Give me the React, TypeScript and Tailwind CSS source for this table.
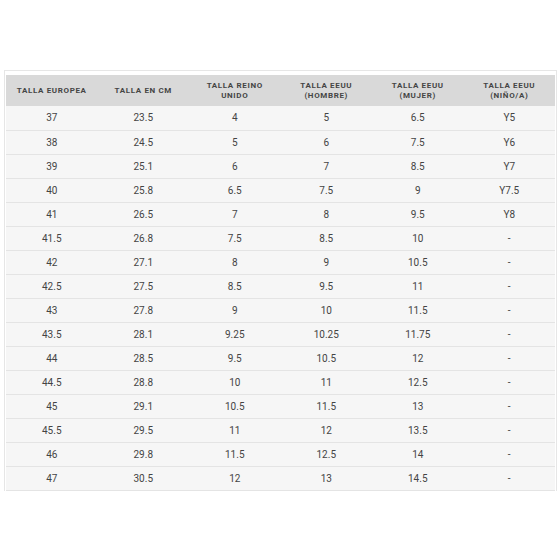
import React from 'react';

const headers: string[][] = [
  ['TALLA EUROPEA'],
  ['TALLA EN CM'],
  ['TALLA REINO', 'UNIDO'],
  ['TALLA EEUU', '(HOMBRE)'],
  ['TALLA EEUU', '(MUJER)'],
  ['TALLA EEUU', '(NIÑO/A)'],
];

const rows: string[][] = [
  ['37', '23.5', '4', '5', '6.5', 'Y5'],
  ['38', '24.5', '5', '6', '7.5', 'Y6'],
  ['39', '25.1', '6', '7', '8.5', 'Y7'],
  ['40', '25.8', '6.5', '7.5', '9', 'Y7.5'],
  ['41', '26.5', '7', '8', '9.5', 'Y8'],
  ['41.5', '26.8', '7.5', '8.5', '10', '-'],
  ['42', '27.1', '8', '9', '10.5', '-'],
  ['42.5', '27.5', '8.5', '9.5', '11', '-'],
  ['43', '27.8', '9', '10', '11.5', '-'],
  ['43.5', '28.1', '9.25', '10.25', '11.75', '-'],
  ['44', '28.5', '9.5', '10.5', '12', '-'],
  ['44.5', '28.8', '10', '11', '12.5', '-'],
  ['45', '29.1', '10.5', '11.5', '13', '-'],
  ['45.5', '29.5', '11', '12', '13.5', '-'],
  ['46', '29.8', '11.5', '12.5', '14', '-'],
  ['47', '30.5', '12', '13', '14.5', '-'],
];

export default function App() {
  return (
    <div className="w-[560px] h-[560px] bg-white pt-[70px] font-['Roboto','Liberation_Sans',sans-serif]">
      <div className="ml-[4px] mr-[3px] border-t border-l border-r border-[#e6e6e6] pt-[4px] pl-[1px] pr-[1px]">
        <table className="w-full border-collapse table-fixed text-center">
          <thead>
            <tr className="bg-[#d9d9d9] h-[31px]">
              {headers.map((h, i) => (
                <th
                  key={i}
                  className="text-[8px] font-bold tracking-[0.08em] leading-[10px] text-[#454545] align-middle"
                >
                  {h.map((line, j) => (
                    <div key={j}>{line}</div>
                  ))}
                </th>
              ))}
            </tr>
          </thead>
          <tbody>
            {rows.map((r, i) => (
              <tr key={i} className="h-[24px] bg-[#f6f6f6] border-b border-[#e4e4e4]">
                {r.map((c, j) => (
                  <td key={j} className="text-[10px] text-[#444] align-middle">
                    {c}
                  </td>
                ))}
              </tr>
            ))}
          </tbody>
        </table>
      </div>
    </div>
  );
}
